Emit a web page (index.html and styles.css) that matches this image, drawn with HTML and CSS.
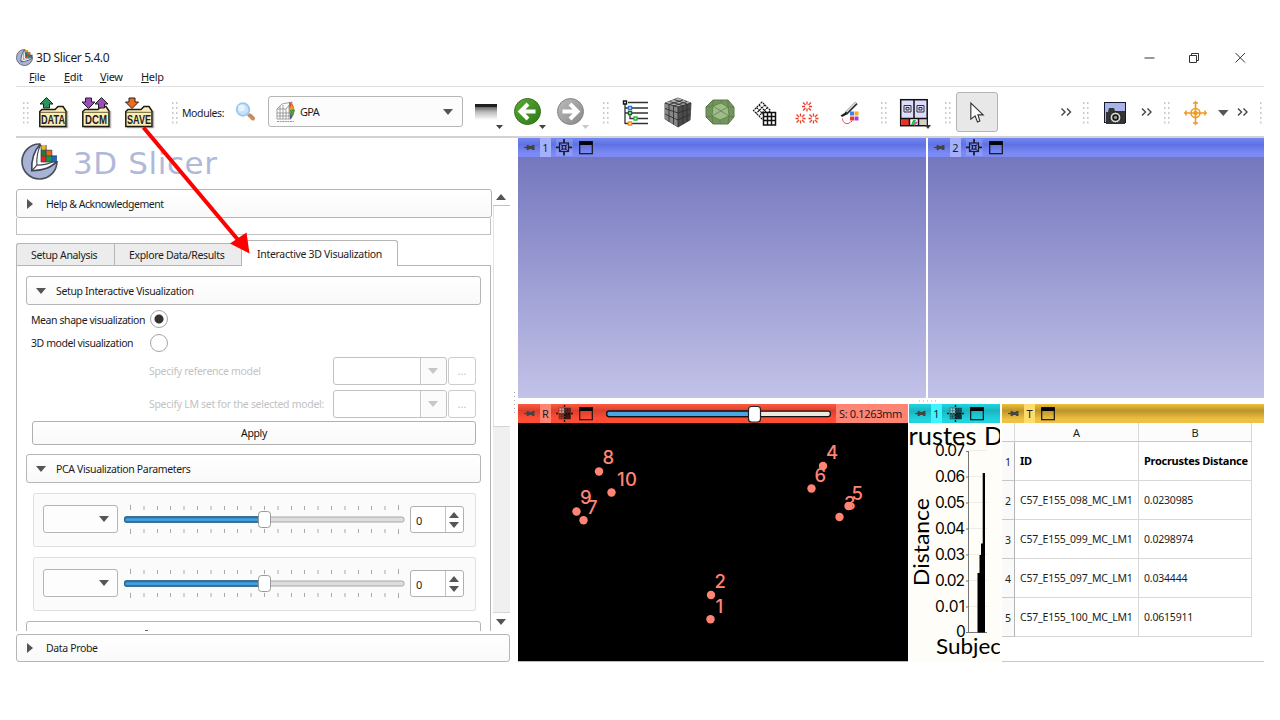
FILE: index.html
```html
<!DOCTYPE html>
<html lang="en">
<head>
<meta charset="utf-8">
<title>3D Slicer 5.4.0</title>
<link rel="stylesheet" href="styles.css">
</head>
<body>
<svg class="defs" width="0" height="0">
  <defs>
    <g id="logo">
      <circle cx="18" cy="18" r="17" fill="#a9b3d5" stroke="#4a4f5c" stroke-width="1.6"/>
      <path d="M19 0 H36 V17.500 L33 17.500 C31 22 24 26 10.500 27 C10 18 13 8 19 1 Z" fill="#fff"/>
      <path d="M19 1 C13 7 10 17 10.500 27 C22 26.500 31 23 35 17.500" fill="none" stroke="#3e434f" stroke-width="1.600"/>
      <path d="M19 2 C16 8 15 14 15.500 21.500 C22 21.500 28 20 33 17.500 M15.500 21.500 L10.500 27" fill="none" stroke="#3e434f" stroke-width="1.100"/>
      <path d="M19.500 2h5v5h-5z" fill="#f2b51c"/><path d="M19.500 7h5v5.500h-5z" fill="#1d7c46"/><path d="M24.500 7h5.500v5.500h-5.500z" fill="#e2661c"/>
      <path d="M19.500 12.500h5v6h-5z" fill="#dd2a20"/><path d="M24.500 12.500h5.500v6h-5.500z" fill="#159a4a"/><path d="M30 12.500h5v5.500h-5z" fill="#2563c4"/>
      <path d="M19.500 7h10.500M19.500 12.500H35M24.500 2v16M30 7v11M19.500 18.500H35M19.500 2V18.500" stroke="#333" stroke-width=".7" fill="none"/>
    </g>
    <g id="handle" fill="#cacaca">
      <path d="M0 15h1.500v2h-1.500zM4 15h1.500v2h-1.500zM0 20h1.500v2h-1.500zM4 20h1.500v2h-1.500zM0 25h1.500v2h-1.500zM4 25h1.500v2h-1.500zM0 30h1.500v2h-1.500zM4 30h1.500v2h-1.500zM0 34.500h1.500v2h-1.500zM4 34.500h1.500v2h-1.500z"/>
    </g>
    <g id="folder">
      <path d="M2 40.500 H28.500 V24" fill="none" stroke="#b5b5b5" stroke-width="1.500"/>
      <path d="M.8 24.500 L3 22.500 H16 L19 19.500 H24 L26 22.500 L27 24 V39.500 H.8 Z" fill="#fbeeb8" stroke="#1c1a10" stroke-width="1.500"/>
      <path d="M1 25.300 H26" stroke="#5a4e22" stroke-width=".9"/>
    </g>
    <path id="up" d="M0 -5.500 L6.500 1 H3 V5 H-3 V1 H-6.500 Z" stroke="#222" stroke-width="1"/>
    <path id="chev" d="M0 21.500l3.500 3.500l-3.500 3.500M5.500 21.500l3.500 3.500l-3.500 3.500" fill="none" stroke="#444" stroke-width="1.400"/>
    <g id="star" stroke="#e8402a" stroke-width="1.300"><path d="M0 -5V-2M0 5V2M-5 0H-2M5 0H2M-4 -4L-1.500 -1.500M4 4L1.500 1.500M-4 4L-1.500 1.500M4 -4L1.500 -1.500"/></g>
    <g id="pin"><path d="M0 5.500H4" stroke="#444" stroke-width="1.200"/><path d="M2.500 3.500L4 2.800L5.500 4H7.500L8.500 3H10.500V8H8.500L7.500 7H5.500L4 8.200L2.500 7.500Z" fill="#444"/></g>
    <g id="cross3d" fill="none" stroke="#181c3c" stroke-width="1.200"><rect x="0" y="0" width="16.500" height="17" fill="#fff" fill-opacity=".15" stroke="none"/><rect x="3.500" y="4" width="9" height="8.500"/><rect x="6.300" y="6.600" width="3.500" height="3.500"/><path d="M4 4.500L6.500 7M12 4.500L9.500 7M4 12L6.500 9.800M12 12L9.500 9.800" stroke-width=".9"/><path d="M8 0V4M8 12.500V16.500M0 8.300H3.500M12.500 8.300H16" stroke-width="1.800"/></g>
    <g id="win"><rect x=".7" y=".7" width="12.600" height="12" fill="none" stroke="#141414" stroke-width="1.200"/><rect x=".5" y=".5" width="13" height="3.500" fill="#050505"/></g>
    <g id="slicecross" stroke="#16181a" fill="none"><path d="M8.500 0V17M0 8.500H17" stroke-width="1.400" stroke-dasharray="2 1"/><rect x="3" y="3" width="5.500" height="5.500" fill="#fff" fill-opacity=".45" stroke="none"/><rect x="8.500" y="3" width="6" height="5.500" fill="#000" fill-opacity=".5" stroke="none"/><rect x="3" y="8.500" width="5.500" height="5.500" fill="#000" fill-opacity=".25" stroke="none"/><rect x="8.500" y="8.500" width="6" height="5.500" fill="#000" fill-opacity=".7" stroke="none"/><path d="M3 3H14.500V14H3ZM5.700 3V14M11.500 3V14M3 5.700H14.500M3 11.300H14.500" stroke-width=".4"/></g>
    <path id="ticks" d="M6.500 0v5M20 1v4M33.500 1v4M46.500 1v4M60 1v4M73.500 1v4M87 1v4M100.500 1v4M113.500 1v4M127 1v4M140.500 1v4M154 1v4M167.500 1v4M180.500 1v4M194 1v4M207.500 1v4M221 1v4M234.500 1v4M247.500 1v4M261 1v4M274.500 0v5" stroke="#a9a9a9" stroke-width="1"/>
    <linearGradient id="blue" x1="0" x2="0" y1="0" y2="1"><stop offset="0" stop-color="#2b84c0"/><stop offset=".6" stop-color="#45a5e4"/><stop offset="1" stop-color="#2b84c0"/></linearGradient>
    <linearGradient id="bw" x1="0" x2="0" y1="0" y2="1"><stop offset="0" stop-color="#1c1c1c"/><stop offset=".16" stop-color="#222"/><stop offset=".18" stop-color="#666"/><stop offset=".5" stop-color="#bbb"/><stop offset="1" stop-color="#fff"/></linearGradient>
    <linearGradient id="green" x1="0" x2="1" y1="0" y2="1"><stop offset="0" stop-color="#5da936"/><stop offset="1" stop-color="#2b7a15"/></linearGradient>
    <linearGradient id="grey" x1="0" x2="1" y1="0" y2="1"><stop offset="0" stop-color="#bcbcbc"/><stop offset="1" stop-color="#888"/></linearGradient>
    <symbol id="slider" viewBox="0 0 284 32">
      <use href="#ticks"/><use href="#ticks" transform="translate(0 29) scale(1 -1)"/>
      <rect x="1" y="12" width="279" height="5" rx="2" fill="#dedede" stroke="#a8a8a8"/>
      <rect x=".7" y="11.800" width="140" height="5.400" rx="1.500" fill="url(#blue)" stroke="#1d587f" stroke-width="1.200"/>
      <rect x="134.500" y="6.500" width="12" height="16" rx="3" fill="#fff" stroke="#999"/>
    </symbol>
  </defs>
</svg>

<div class="window">
  <header class="titlebar">
    <svg class="app-icon" width="17" height="17" viewBox="0 0 36 36"><use href="#logo"/></svg>
    <span class="app-title">3D Slicer 5.4.0</span>
    <svg class="winctl" width="104" height="16" viewBox="1144 49.500 104 16" fill="none" stroke="#333" stroke-width="1"><path d="M1144.500 57.500h10M1189.500 55v7h7v-7zM1191.500 55v-2h7v7h-2M1235.500 52.500l9.500 9.500M1245 52.500l-9.500 9.500"/></svg>
  </header>
  <nav class="menubar"><span><u>F</u>ile</span><span><u>E</u>dit</span><span><u>V</u>iew</span><span><u>H</u>elp</span></nav>

  <div class="toolbar">
    <svg width="22" height="50"><use href="#handle" x="7"/></svg>
    <svg width="43" height="50"><use href="#folder" x="1"/><use href="#up" x="8.500" y="16" fill="#28935a"/><text x="3" y="37" class="ico-t" textLength="24" lengthAdjust="spacingAndGlyphs">DATA</text></svg>
    <svg width="43" height="50"><use href="#folder" x="1"/><use href="#up" transform="translate(7.500 16) scale(1 -1)" fill="#a04ac0"/><use href="#up" x="20.500" y="16" fill="#a04ac0"/><text x="4" y="37" class="ico-t" textLength="22" lengthAdjust="spacingAndGlyphs">DCM</text></svg>
    <svg width="40" height="50"><use href="#folder" x="1"/><use href="#up" transform="translate(8 16) scale(1 -1)" fill="#f06a1c"/><text x="3" y="37" class="ico-t" textLength="24" lengthAdjust="spacingAndGlyphs">SAVE</text></svg>
    <svg width="18" height="50"><use href="#handle" x="8"/></svg>
    <span class="modules">Modules:</span>
    <svg width="38" height="50"><path d="M18 27.500l2 1.500" stroke="#999" stroke-width="3"/><path d="M20 28.500l3 3" stroke="#c88d5e" stroke-width="4" stroke-linecap="round"/><circle cx="13" cy="22.500" r="6.300" fill="#c4e2fb" stroke="#a0c6ea" stroke-width="1.800"/><circle cx="11.500" cy="21" r="3.500" fill="#e4f3ff"/></svg>
    <div class="module-combo">
      <svg width="24" height="22"><path d="M2 8L7 3L17 1L16 18H2ZM2 8H11L17 1M11 8V18M5 5V18M8 4V18M2 12H16M2 15H16M14 4V18" fill="#fff" stroke="#888" stroke-width=".8"/><path d="M14 1C21 3 21 14 15 18Z" fill="#e04424"/><path d="M16 3L19.500 8L15 9Z" fill="#f1a522"/><path d="M15 9L20 9L18 15L15 13Z" fill="#4b9d45"/><path d="M15 13L17.500 16L15 18Z" fill="#2d68b5"/><path d="M2 20.500H19" stroke="#999" stroke-dasharray="2 .6"/></svg>
      <span>GPA</span><i class="tri down"></i>
    </div>
    <svg width="46" height="50" viewBox="463 87 46 50"><rect x="475" y="104" width="22" height="16" fill="url(#bw)"/><path d="M496 125h7l-3.500 4z" fill="#444"/></svg>
    <svg width="44" height="50" viewBox="509 87 44 50"><circle cx="527.500" cy="111.500" r="13" fill="url(#green)" stroke="#3a6c27"/><path d="M535.500 111.500h-14M528 104l-7.500 7.500l7.500 7.500" fill="none" stroke="#fff" stroke-width="4"/><path d="M539 125h7l-3.500 4z" fill="#444"/></svg>
    <svg width="43" height="50" viewBox="553 87 43 50"><circle cx="570.500" cy="111.500" r="13" fill="url(#grey)" stroke="#858585"/><path d="M562.500 111.500h14M570 104l7.500 7.500l-7.500 7.500" fill="none" stroke="#fff" stroke-width="4"/><path d="M582 125h7l-3.500 4z" fill="#c8c8c8"/></svg>
    <svg width="20" height="50" viewBox="596 87 20 50"><use href="#handle" x="603" y="87"/></svg>
    <svg width="41" height="50" viewBox="616 87 41 50"><path d="M625 104V124M625 108H630M625 113H630M630 115V118.500H636M628 102.500H648M632 108H648M632 113H648M637 118.500H648M632 123.500H648M625 123.500H629" fill="none" stroke="#333" stroke-width="1.300"/><g fill="#fff" stroke-width="1.400"><path d="M623.500 101h3v3h-3z" stroke="#111"/><path d="M628.500 106.500h3v3h-3z" stroke="#2377db"/><path d="M628.500 111.500h3v3h-3z" stroke="#116b22"/><path d="M634 117h3v3h-3z" stroke="#22bb35"/><path d="M628.500 122h3v3h-3z" stroke="#f28b26"/></g></svg>
    <svg width="42" height="50" viewBox="657 87 42 50"><path d="M665 103L678 98L691 103L690 120L678 127L665 119Z" fill="#777" stroke="#555"/><path d="M665 103L678 107L691 103L678 98Z" fill="#b5b5b5"/><path d="M665 103L678 107V127L665 119Z" fill="#888"/><path d="M678 107L691 103L690 120L678 127Z" fill="#4b4b4b"/><path d="M665 103L678 107L691 103M678 107V127M669.500 101.500L683 105.500V124M674 99.500L687 104V121.500M683 100L669 104.500V122M687 101.500L673.500 106V124.500M665 108.500L678 113L690.500 108.500M665 114L678 120L690 114.500" fill="none" stroke="#303030" stroke-width=".9"/></svg>
    <svg width="44" height="50" viewBox="699 87 44 50"><path d="M713 100H728L734 107V117L728 124H713L706 117V107Z" fill="#71955c" stroke="#5d7a4a"/><path d="M713 106L721 103L728 107L729 116L720 120L712 116Z" fill="#9fbc88"/><path d="M713 100L713 106L706 107M728 100V107L734 107M713 124L712 116L706 117M728 124L729 116L734 117M713 106L721 103L728 107L729 116L720 120L712 116ZM713 106L729 116M728 107L712 116M721 103V100M720 120V124" fill="none" stroke="#587a46" stroke-width=".7"/></svg>
    <svg width="43" height="50" viewBox="743 87 43 50"><g fill="#fff" stroke="#111" stroke-width="1.100"><path d="M762 102L753.500 110.500L762 119L770.500 110.500ZM759 105L767.500 113.500M756.500 107.500L765 116M765 105L756 113.500M767.500 107.500L759 116" stroke-dasharray="2 .8"/><path d="M763.500 112.500H775.500V125H763.500ZM767.500 112.500V125M771.500 112.500V125M763.500 116.500H775.500M763.500 120.500H775.500" stroke-width="1.500"/></g></svg>
    <svg width="44" height="50" viewBox="786 87 44 50"><use href="#star" x="807" y="106.500"/><use href="#star" x="800.500" y="118.500"/><use href="#star" x="813.500" y="118.500"/></svg>
    <svg width="44" height="50" viewBox="830 87 44 50"><path d="M850 111.500h4v4h-4z" fill="#3c85e8"/><path d="M854.500 111.500h4v4h-4z" fill="#f3ad26"/><path d="M850 116.500h4v4h-4z" fill="#e93b27"/><path d="M854.500 116.500h4v4h-4z" fill="#b537d7"/><path d="M856.500 103L846 113.500" stroke="#333" stroke-width="3.200"/><path d="M856 102.500L846.500 112" stroke="#eee" stroke-width="1.300"/><path d="M846 112L840.500 115.500L842 117L847 114.500Z" fill="#222"/><path d="M842.500 118.500C842.500 122 845 124 848 123.500C851 123 850 121 852 121.500" fill="none" stroke="#e54b5c"/></svg>
    <svg width="20" height="50" viewBox="874 87 20 50"><use href="#handle" x="881" y="87"/></svg>
    <svg width="44" height="50" viewBox="894 87 44 50"><rect x="900.700" y="99.700" width="26.500" height="26" fill="#dcdcff" stroke="#111" stroke-width="1.500"/><rect x="901.500" y="119" width="8.500" height="6" fill="#e1352c"/><rect x="910" y="119" width="8.500" height="6" fill="#fff"/><rect x="918.500" y="119" width="8" height="6" fill="#d4d0c6"/><path d="M900 118.500H928M914 99V118M909.500 118V126M918.500 118V126" stroke="#111" stroke-width="1.500"/><path d="M904 105.500H911V112H904ZM906 107.500H909V110H906ZM917 105.500H924V112H917ZM919 107.500H922V110H919Z" fill="none" stroke="#333"/><path d="M911 125L913 120L916 120L914 125Z" fill="#28c245"/><path d="M914 125L917 122" stroke="#e044d4" stroke-width="2"/><path d="M925 125h6l-3 4z" fill="#333"/></svg>
    <svg width="18" height="50" viewBox="938 87 18 50"><use href="#handle" x="945" y="87"/></svg>
    <svg class="pressed" width="42" height="40" viewBox="956 92 42 40"><path d="M970.500 102.500V119.500L975 116L977.500 122.500L980 121.500L978 115H983.500Z" fill="#fff" stroke="#333" stroke-width="1.200"/></svg>
    <svg width="62" height="50"></svg>
    <svg width="19" height="50"><use href="#chev" x="1.500"/></svg>
    <svg width="20" height="50" viewBox="1079 87 20 50"><use href="#handle" x="1083" y="87"/></svg>
    <svg width="38" height="50" viewBox="1099 87 38 50"><rect x="1104.500" y="102.500" width="21" height="20" fill="#a9b3ea" stroke="#161a30"/><path d="M1106 112H1108L1109 108H1114L1115 111H1125V124H1106Z" fill="#343434"/><circle cx="1115.500" cy="117.500" r="5.500" fill="#d4d6cf" stroke="#111"/><circle cx="1115.500" cy="117.500" r="2.500" fill="#8b9a91" stroke="#111" stroke-width="1.500"/></svg>
    <svg width="21" height="50" viewBox="1137 87 21 50"><use href="#chev" x="1142" y="87"/></svg>
    <svg width="20" height="50" viewBox="1158 87 20 50"><use href="#handle" x="1164" y="87"/></svg>
    <svg width="56" height="50" viewBox="1178 87 56 50"><g fill="none" stroke="#ee9b26" stroke-width="1.600"><circle cx="1195.500" cy="113" r="4.500"/><path d="M1195.500 101V125M1184 113H1207M1193 103H1198M1193 123H1198M1186 110.500V115.500M1205 110.500V115.500"/><circle cx="1195.500" cy="113" r="1.500"/></g><path d="M1218 110h10.500l-5.200 6z" fill="#555"/></svg>
    <svg width="24" height="50" viewBox="1234 87 24 50"><use href="#chev" x="1238" y="87"/></svg>
    <svg width="6" height="50" viewBox="1258 87 6 50"><use href="#handle" x="1260" y="87"/></svg>
  </div>

  <main class="main">
    <section class="panel">
      <div class="brand"><svg width="37" height="37" viewBox="0 0 36 36"><use href="#logo"/></svg><span>3D Slicer</span></div>
      <div class="scroll">
        <div class="module">
          <div class="collapse help"><i class="tri right"></i>Help &amp; Acknowledgement</div>
          <div class="strip"></div>
          <div class="tabs"><div class="tab t1">Setup Analysis</div><div class="tab t2">Explore Data/Results</div><div class="tab active">Interactive 3D Visualization</div><div class="tabline"></div></div>
          <div class="page">
            <div class="collapse sub"><i class="tri down"></i><span>Setup Interactive Visualization</span></div>
            <div class="radio-row r1"><span>Mean shape visualization</span><i class="radio on"></i></div>
            <div class="radio-row"><span class="m3d">3D model visualization</span><i class="radio"></i></div>
            <div class="path-row"><span>Specify reference model</span><div class="path"><i class="tri down"></i></div><div class="dots">...</div></div>
            <div class="path-row second"><span>Specify LM set for the selected model:</span><div class="path"><i class="tri down"></i></div><div class="dots">...</div></div>
            <div class="apply">Apply</div>
            <div class="collapse sub"><i class="tri down"></i>PCA Visualization Parameters</div>
            <div class="pc-frame"><div class="pc-combo"><i class="tri down"></i></div><svg width="284" height="32"><use href="#slider" width="284" height="32"/></svg><div class="spin"><span>0</span><div><i class="tri up"></i><i class="tri down"></i></div></div></div>
            <div class="pc-frame"><div class="pc-combo"><i class="tri down"></i></div><svg width="284" height="32"><use href="#slider" width="284" height="32"/></svg><div class="spin"><span>0</span><div><i class="tri up"></i><i class="tri down"></i></div></div></div>
            <div class="collapse sub cut"><b></b></div>
          </div>
        </div>
        <div class="vbar"><div class="vup"><i class="tri up"></i></div><div class="track"></div><div class="thumb"></div><div class="vdown"><i class="tri down"></i></div></div>
      </div>
      <div class="collapse probe"><i class="tri right"></i>Data Probe</div>
    </section>
    <div class="splitter"><svg width="8" height="24"><path d="M4.500 2V24" stroke="#aaa" stroke-dasharray="1 3"/></svg></div>
    <section class="views">
      <div class="top">
        <div class="view3d"><div class="bar b3"><svg width="12" height="11"><use href="#pin"/></svg><b>1</b><svg class="cr" width="17" height="17"><use href="#cross3d"/></svg><svg width="14" height="14"><use href="#win"/></svg></div></div>
        <div class="view3d"><div class="bar b3"><svg width="12" height="11"><use href="#pin"/></svg><b>2</b><svg class="cr" width="17" height="17"><use href="#cross3d"/></svg><svg width="14" height="14"><use href="#win"/></svg></div></div>
      </div>
      <div class="hsplit"><svg width="20" height="4"><path d="M0 2H20" stroke="#aaa" stroke-dasharray="1 3"/></svg></div>
      <div class="bottom">
        <div class="slice">
          <div class="bar red"><svg width="12" height="11"><use href="#pin"/></svg><b>R</b><svg class="cr" width="17" height="17"><use href="#slicecross"/></svg><svg width="14" height="14"><use href="#win"/></svg>
            <svg class="slice-slider" width="226" height="18"><rect x=".8" y="6.200" width="223.500" height="5.400" rx="2" fill="#eee9df" stroke="#111" stroke-width="1.300"/><rect x=".8" y="6.200" width="144" height="5.400" rx="2" fill="#4aa5e5" stroke="#111" stroke-width="1.300"/><rect x="142.500" y="1.500" width="12" height="15.500" rx="3" fill="#fff" stroke="#222" stroke-width="1.200"/></svg>
            <span class="offset">S: 0.1263mm</span></div>
          <svg class="points" width="390" height="239" viewBox="518 423 390 239" fill="#ff8474">
            <g><circle cx="599" cy="471.500" r="4.200"/><circle cx="611.500" cy="492.500" r="4.200"/><circle cx="576.500" cy="511.500" r="4.200"/><circle cx="583.500" cy="520.300" r="4.200"/><circle cx="823" cy="466" r="4.200"/><circle cx="811.500" cy="488.500" r="4.200"/><circle cx="848.500" cy="506" r="4.200"/><circle cx="839.500" cy="517" r="4.200"/><circle cx="711" cy="595" r="4.200"/><circle cx="710.500" cy="619.200" r="4.200"/></g>
            <text x="602.500" y="463.500">8</text><text x="617" y="485.500" textLength="20">10</text><text x="580" y="504">9</text><text x="587" y="513.500">7</text><text x="826" y="459">4</text><text x="814.500" y="481.500">6</text><text x="851.500" y="499.500">5</text><text x="844" y="509.500">3</text><text x="714.500" y="588">2</text><text x="715.500" y="612.500">1</text>
          </svg>
        </div>
        <div class="plot">
          <div class="bar cyan"><svg width="12" height="11"><use href="#pin"/></svg><b>1</b><svg class="cr" width="17" height="17"><use href="#slicecross"/></svg><svg width="14" height="14"><use href="#win"/></svg></div>
          <svg class="chart" width="91" height="239" viewBox="909 423 91 239">
            <path d="M969 450.500H987M969 476.500H987M969 502.500H987M969 528.500H987M969 554.500H987M969 580.500H987M969 606.500H987" stroke="#eeece5"/>
            <path d="M968.500 451V632.500H987M966 451.500H969M966 477H969M966 503H969M966 529H969M966 555H969M966 581H969M966 607H969M966 632.500H969" fill="none" stroke="#777"/>
            <path d="M977.500 632.500V573H979.500V555H981V543.500H982.700V473H985V632.500Z"/>
            <text x="908.500" y="445" class="ttl" textLength="68" lengthAdjust="spacingAndGlyphs">rustes</text><text x="984" y="445" class="ttl">D</text>
            <g class="tick"><text x="935" y="456" textLength="30">0.07</text><text x="935" y="482" textLength="30">0.06</text><text x="935" y="508" textLength="30">0.05</text><text x="935" y="534" textLength="30">0.04</text><text x="935" y="559.500" textLength="30">0.03</text><text x="935" y="585.500" textLength="30">0.02</text><text x="935" y="611.500" textLength="30">0.01</text><text x="956" y="637">0</text></g>
            <text class="axis" transform="translate(928.500 586) rotate(-90)" textLength="88" lengthAdjust="spacingAndGlyphs">Distance</text>
            <text class="axis" x="936" y="654" textLength="65" lengthAdjust="spacingAndGlyphs">Subjec</text>
          </svg>
        </div>
        <div class="tableview">
          <div class="bar gold"><svg width="12" height="11"><use href="#pin"/></svg><b>T</b><svg width="14" height="14"><use href="#win"/></svg></div>
          <div class="grid">
            <div class="h"></div><div class="h">A</div><div class="h">B</div>
            <div class="n">1</div><div class="c bold">ID</div><div class="c bold">Procrustes Distance</div>
            <div class="n">2</div><div class="c">C57_E155_098_MC_LM1</div><div class="c">0.0230985</div>
            <div class="n">3</div><div class="c">C57_E155_099_MC_LM1</div><div class="c">0.0298974</div>
            <div class="n">4</div><div class="c">C57_E155_097_MC_LM1</div><div class="c">0.034444</div>
            <div class="n">5</div><div class="c">C57_E155_100_MC_LM1</div><div class="c">0.0615911</div>
          </div>
        </div>
      </div>
    </section>
  </main>
  <svg class="arrow" width="112" height="132" viewBox="140 124 112 132"><path d="M143.500 127.500L239 241" stroke="#fe0000" stroke-width="4"/><path d="M249.500 253.500L230 243.500L246.500 232.500Z" fill="#fe0000"/></svg>
</div>
</body>
</html>
```
FILE: styles.css
```css
* { box-sizing: border-box; }
body { margin: 0; width: 1280px; height: 720px; overflow: hidden; background: #fff; font: 11px/14px "Noto Sans", sans-serif; color: #1c1c1c; }
svg { display: block; flex: none; }
.defs { position: absolute; }
.window { position: relative; width: 1248px; margin: 0 16px; padding-top: 48px; }
.titlebar { display: flex; align-items: center; height: 19px; }
.app-title { margin-left: 3px; font-size: 12px; letter-spacing: -.4px; }
.winctl { margin-left: auto; margin-right: 16px; }
.menubar { display: flex; height: 20px; border-bottom: 1px solid #dedede; padding: 3px 0 0 13px; }
.menubar span { width: 35px; letter-spacing: -.35px; }
.menubar span:nth-child(2) { width: 36px; }
.menubar span:nth-child(3) { width: 41px; }
.toolbar { display: flex; align-items: center; height: 51px; border-bottom: 2px solid #d2d2d2; }
.ico-t { font: bold 12px "Liberation Sans", sans-serif; fill: #222; }
.modules { width: 50px; font-size: 10.5px; letter-spacing: -.4px; white-space: nowrap; padding-top: 2px; }
.module-combo { display: flex; align-items: center; flex: none; width: 195px; height: 31px; padding: 0 9px 0 6px; border: 1px solid #b5b5b5; border-radius: 3px; background: #fcfcfc; }
.module-combo span { margin-left: 1px; flex: 1; letter-spacing: -.7px; padding-top: 1px; }
.pressed { border: 1px solid #b4b4b4; border-radius: 3px; background: #e8e8e8; margin-top: 1px; }
.tri { display: block; flex: none; width: 0; height: 0; border: 5px solid transparent; }
.tri.down { border-top: 6px solid #555; border-bottom: 0; }
.tri.up { border-bottom: 6px solid #555; border-top: 0; }
.tri.right { border-left: 6px solid #555; border-right: 0; }

.main { display: flex; height: 524px; }
.panel { display: flex; flex-direction: column; width: 494px; font-size: 10.5px; letter-spacing: -.35px; }
.brand { display: flex; height: 51px; padding: 5px 0 0 5px; }
.brand span { margin-left: 15px; font: 31px/40px "DejaVu Sans", sans-serif; color: #b0b9d9; letter-spacing: .6px; }
.scroll { display: flex; height: 442px; overflow: hidden; }
.module { width: 476px; }
.collapse { display: flex; align-items: center; border: 1px solid #b5b5b5; border-radius: 3px; background: linear-gradient(#fff, #f9f9f9); }
.help { height: 29px; padding-left: 10px; letter-spacing: -.46px; }
.help .tri, .probe .tri { margin-right: 13px; }
.strip { width: 475px; height: 17px; border: 1px solid #c2c2c2; border-top: 0; }
.tabs { display: flex; align-items: flex-end; height: 31px; width: 475px; }
.tab { height: 23px; border: 1px solid #b5b5b5; background: #ececec; padding-left: 14px; line-height: 23px; white-space: nowrap; }
.t1 { width: 98px; border-radius: 3px 0 0 0; border-right: 0; }
.t2 { width: 128px; }
.tab.active { width: 156px; height: 26px; background: #fff; border-left: 0; border-bottom: 0; border-radius: 0 3px 0 0; padding-left: 15px; line-height: 27px; letter-spacing: -.31px; }
.tabline { flex: 1; border-bottom: 1px solid #b5b5b5; }
.page { width: 475px; height: 365px; border: solid #b5b5b5; border-width: 0 1px; padding: 10px 9px 0; }
.sub { height: 29px; padding-left: 9px; }
.sub .tri { margin-right: 10px; }
.radio-row { display: flex; align-items: center; height: 23px; padding-left: 5px; }
.r1 { margin-top: 2px; height: 24px; }
.radio-row span { width: 119px; white-space: nowrap; padding-top: 1px; letter-spacing: -.42px; }
.radio { width: 18px; height: 18px; border: 1px solid #a5a5a5; border-radius: 50%; background: #fff; }
.radio.on { background: radial-gradient(circle, #333 0 4px, #fff 5px); }
.path-row { display: flex; height: 29px; margin-top: 2px; padding-left: 123px; align-items: center; color: #c2c2c2; }
.path-row.second { margin-top: 4px; }
.path-row span { width: 184px; white-space: nowrap; letter-spacing: -.3px; }
.path { display: flex; align-items: center; justify-content: flex-end; width: 114px; height: 28px; padding-right: 8px; border: 1px solid #c2c2c2; border-radius: 3px; background: linear-gradient(90deg, #fff 86px, #c8c8c8 86px 87px, #fbfbfb 87px); }
.path .tri { border-top-color: #c6c6c6; }
.dots { width: 28px; height: 28px; margin-left: 1px; border: 1px solid #ccc; border-radius: 3px; text-align: center; line-height: 26px; font-size: 11px; letter-spacing: 0; }
.apply { width: 444px; height: 24px; margin: 3px 0 9px 6px; border: 1px solid #b0b0b0; border-radius: 3px; text-align: center; line-height: 23px; background: linear-gradient(#fff, #f9f9f9); color: #111; }
.pc-frame { display: flex; width: 443px; height: 54px; margin: 10px 0 0 7px; padding: 12px 0 0 9px; border: 1px solid #e0e0e0; background: #fbfbfb; border-radius: 2px; }
.pc-combo { display: flex; align-items: center; justify-content: flex-end; width: 75px; height: 28px; margin-right: 6px; margin-top: -1px; padding-right: 8px; border: 1px solid #b5b5b5; border-radius: 3px; background: #fdfdfd; }
.pc-frame > svg { margin-top: -1px; }
.spin { display: flex; width: 54px; height: 27px; margin-left: 2px; border: 1px solid #b0b0b0; border-radius: 3px; background: #fff; }
.spin span { width: 35px; padding-left: 5px; line-height: 27px; font-size: 11px; border-right: 1px solid #c2c2c2; }
.spin div { padding: 5px 0 0 3px; display: grid; gap: 4px; align-content: start; }
.cut { margin-top: 10px; align-items: flex-start; }
.cut b { width: 3px; height: 1px; margin: 8px 0 0 109px; background: #666; }
.vbar { width: 18px; padding-left: 1px; }
.vup { height: 17px; border-bottom: 1px solid #c2c2c2; padding: 5px 0 0 3px; }
.track { height: 220px; border-left: 1px solid #e4e4e4; }
.thumb { height: 187px; border: 1px solid #d5d5d5; border-width: 1px 0; background: #f0f0f0; }
.vdown { padding: 6px 0 0 3px; }
.probe { height: 28px; margin-top: 3px; padding-left: 10px; flex: none; }

.splitter { width: 8px; padding-top: 252px; }
.views { width: 746px; }
.top { display: grid; grid-template-columns: 408px 336px; gap: 2px; height: 260px; }
.view3d { background: linear-gradient(#7477be 18px, #c3c2e8); }
.bar { display: flex; align-items: center; height: 19px; padding-left: 6px; }
.bar b { width: 11px; height: 19px; margin: 0 5px 0 4px; font-weight: normal; text-align: center; line-height: 19px; }
.bar .cr { margin-right: 6px; }
.b3 { background: linear-gradient(#7286f5, #6072e2 35%, #7b8af4 80%); }
.b3 b { background: #a4b0fb; }
.hsplit { height: 6px; padding: 1px 0 0 401px; }
.bottom { display: flex; height: 258px; }
.slice { width: 390px; background: #000; border-bottom: 1px solid #bbb; }
.red { background: linear-gradient(#ff5a42, #d8402b 35%, #ff4c34 75%); }
.red b { background: #ff8474; }
.slice-slider { margin-left: 13px; }
.offset { width: 71px; height: 19px; margin-left: 4px; padding-left: 3px; background: #ff8474; line-height: 19px; white-space: nowrap; flex: 1; letter-spacing: -.35px; }
.points text { font: 500 18.5px Inter, sans-serif; }
.plot { width: 91px; margin-left: 1px; background: #fffdf7; }
.cyan { background: linear-gradient(#1fd6e2, #19b5c0 35%, #20d3dd 80%); }
.cyan b { background: #3ff3ff; }
.ttl { font: 25px Lato, sans-serif; }
.tick { font: 15.5px Inter, sans-serif; }
.axis { font: 21px Lato, sans-serif; }
.tableview { width: 262px; margin-left: 2px; border-bottom: 1px solid #c8c8c8; }
.gold { background: linear-gradient(#edbf38, #bd942a 35%, #eec043 80%); }
.gold b + svg { margin-left: 1px; }
.gold b { background: #ffdb69; }
.grid { display: grid; grid-template-columns: 13px 124px 113px; grid-template-rows: 19px repeat(5, 39px); font-size: 10.5px; letter-spacing: -.2px; }
.h { border-right: 1px solid #d8d8d8; border-bottom: 1px solid #c8c8c8; background: #fcfcfc; text-align: center; line-height: 20px; font-size: 11px; }
.n { border-right: 1px solid #b5b5b5; border-bottom: 1px solid #c8c8c8; background: #fafafa; padding-left: 3px; line-height: 40px; }
.c { border-right: 1px solid #d8d8d8; border-bottom: 1px solid #d8d8d8; padding-left: 5px; line-height: 38px; white-space: nowrap; }
.bold { font-size: 11px; font-weight: bold; color: #000; letter-spacing: -.28px; }
.arrow { position: absolute; left: 124px; top: 124px; }
```
